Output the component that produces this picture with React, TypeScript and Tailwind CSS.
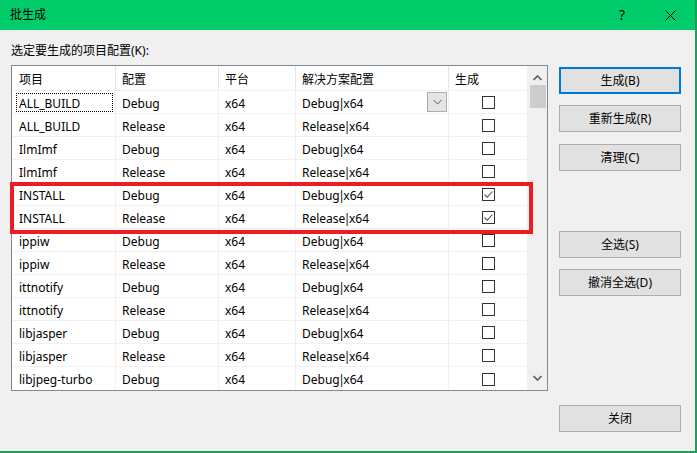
import React from "react";

const rows: [string, string, string, string, boolean][] = [
  ["ALL_BUILD", "Debug", "x64", "Debug", false],
  ["ALL_BUILD", "Release", "x64", "Release", false],
  ["IlmImf", "Debug", "x64", "Debug", false],
  ["IlmImf", "Release", "x64", "Release", false],
  ["INSTALL", "Debug", "x64", "Debug", true],
  ["INSTALL", "Release", "x64", "Release", true],
  ["ippiw", "Debug", "x64", "Debug", false],
  ["ippiw", "Release", "x64", "Release", false],
  ["ittnotify", "Debug", "x64", "Debug", false],
  ["ittnotify", "Release", "x64", "Release", false],
  ["libjasper", "Debug", "x64", "Debug", false],
  ["libjasper", "Release", "x64", "Release", false],
  ["libjpeg-turbo", "Debug", "x64", "Debug", false],
];

function Btn({ label, def }: { label: string; def?: boolean }) {
  return (
    <div
      className={
        "w-[122px] h-[27px] flex items-center justify-center bg-[#e1e1e1] text-[12px] text-black " +
        (def ? "border-2 border-[#0078d7]" : "border border-[#adadad]")
      }
    >
      {label}
    </div>
  );
}

function Checkbox({ checked }: { checked: boolean }) {
  return (
    <div className="w-[13px] h-[13px] border border-[#333333] bg-white flex items-center justify-center">
      {checked && (
        <svg width="11" height="11" viewBox="0 0 11 11">
          <path d="M1.5 5.5 L4.2 8.2 L9.5 2.5" fill="none" stroke="#555" strokeWidth="1.1" />
        </svg>
      )}
    </div>
  );
}

export default function App() {
  return (
    <div
      className="relative w-[697px] h-[453px] bg-[#f0f0f0] border-r-2 border-b-2 border-[#1e9e5a] overflow-hidden text-black text-[12px]"
      style={{ fontFamily: '"Noto Sans", "Noto Sans CJK SC", sans-serif' }}
    >
      {/* title bar */}
      <div className="h-[30px] bg-[#00cc6a] flex items-center pl-[10px]">
        <span className="text-[12px] leading-none">批生成</span>
        <div className="flex-1" />
        <span className="text-[14px] leading-none mr-[40px]">?</span>
        <svg width="11" height="11" viewBox="0 0 11 11" className="mr-[19px]">
          <path d="M0.5 0.5 L10.5 10.5 M10.5 0.5 L0.5 10.5" stroke="#000" strokeWidth="1" />
        </svg>
      </div>

      <div className="flex pl-[11px]">
        {/* left */}
        <div className="w-[537px]">
          <div className="h-[35px] pt-[13px] leading-[16px]">选定要生成的项目配置(K):</div>
          <div className="h-[326px] border border-[#828790] bg-white flex">
            <div className="w-[515px] flex flex-col">
              {/* header */}
              <div className="h-[25px] flex items-center border-b border-[#f0f0f0]">
                <div className="w-[104px] h-full flex items-center pl-[7px] pt-[3px] border-r border-[#e5e5e5]">项目</div>
                <div className="w-[103px] h-full flex items-center pl-[6px] pt-[3px] border-r border-[#e5e5e5]">配置</div>
                <div className="w-[77px] h-full flex items-center pl-[6px] pt-[3px] border-r border-[#e5e5e5]">平台</div>
                <div className="w-[153px] h-full flex items-center pl-[6px] pt-[3px] border-r border-[#e5e5e5]">解决方案配置</div>
                <div className="w-[78px] h-full flex items-center pl-[6px] pt-[3px]">生成</div>
              </div>
              {rows.map((r, i) => (
                <div key={i} className="h-[23px] flex items-center border-b border-[#f0f0f0] last:border-b-0">
                  <div className="relative w-[104px] h-full flex items-center pl-[7px] pt-[3px] border-r border-[#f0f0f0]">
                    {i === 0 && (
                      <div className="absolute left-[4px] top-[2px] w-[97px] h-[19px] border border-dotted border-black" />
                    )}
                    {r[0]}
                  </div>
                  <div className="w-[103px] h-full flex items-center pl-[6px] pt-[3px] border-r border-[#f0f0f0]">{r[1]}</div>
                  <div className="w-[77px] h-full flex items-center pl-[6px] pt-[3px] border-r border-[#f0f0f0]">{r[2]}</div>
                  <div className="relative w-[153px] h-full flex items-center pl-[6px] border-r border-[#f0f0f0] justify-between pr-[1px]">
                    <span className="pt-[3px]">
                      {r[3]}
                      <span className="mx-[-1.5px]">|</span>
                      x64
                    </span>
                    {i === 0 && (
                      <div className="w-[20px] h-[20px] bg-[#e5e5e5] border border-[#adadad] flex items-center justify-center">
                        <svg width="9" height="6" viewBox="0 0 9 6">
                          <path d="M0.5 1 L4.5 5 L8.5 1" fill="none" stroke="#555" strokeWidth="1" />
                        </svg>
                      </div>
                    )}
                  </div>
                  <div className="w-[78px] h-full flex items-center justify-center pt-[1px]">
                    <Checkbox checked={r[4]} />
                  </div>
                </div>
              ))}
            </div>
            {/* scrollbar */}
            <div className="w-[20px] bg-[#f0f0f0] flex flex-col items-center border-l border-[#f0f0f0]">
              <div className="h-[19px] w-full flex items-center justify-center pt-[4px]">
                <svg width="9" height="6" viewBox="0 0 9 6">
                  <path d="M0.5 5 L4.5 1 L8.5 5" fill="none" stroke="#606060" strokeWidth="1.6" />
                </svg>
              </div>
              <div className="w-[16px] h-[23px] bg-[#cdcdcd]" />
              <div className="flex-1" />
              <div className="h-[20px] w-full flex items-center justify-center pb-[4px]">
                <svg width="9" height="6" viewBox="0 0 9 6">
                  <path d="M0.5 1 L4.5 5 L8.5 1" fill="none" stroke="#606060" strokeWidth="1.6" />
                </svg>
              </div>
            </div>
          </div>
        </div>

        {/* right buttons */}
        <div className="ml-[11px] pt-[37px] flex flex-col">
          <Btn label="生成(B)" def />
          <div className="mt-[11px]">
            <Btn label="重新生成(R)" />
          </div>
          <div className="mt-[12px]">
            <Btn label="清理(C)" />
          </div>
          <div className="mt-[60px]">
            <Btn label="全选(S)" />
          </div>
          <div className="mt-[11px]">
            <Btn label="撤消全选(D)" />
          </div>
          <div className="mt-[109px]">
            <Btn label="关闭" />
          </div>
        </div>
      </div>

      {/* red highlight */}
      <div className="absolute left-[10px] top-[182px] w-[523px] h-[52px] border-4 border-[#ed1c24]" />
    </div>
  );
}
